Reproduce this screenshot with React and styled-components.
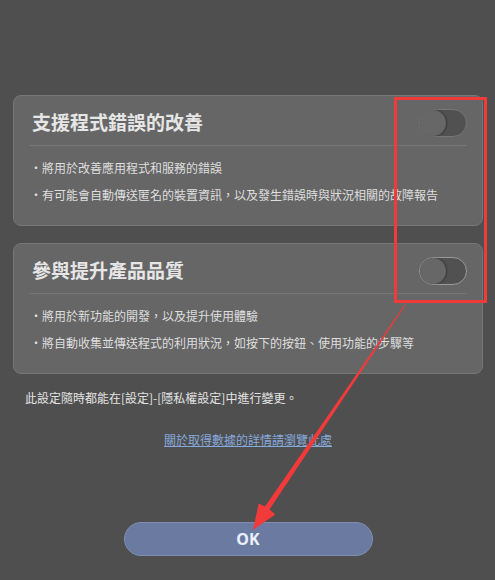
import styled, { createGlobalStyle } from "styled-components";

const GlobalStyle = createGlobalStyle`
    html, body {
        margin: 0;
        padding: 0;
        background: #4f4f4f;
    }
    body {
        font-family: "Noto Sans CJK TC", "Noto Sans", sans-serif;
    }
`
const Page = styled.div`
    position: relative;
    width: 495px;
    height: 580px;
    box-sizing: border-box;
    padding: 95px 12px 0 13px;
    display: flex;
    flex-direction: column;
    overflow: hidden;
`
const Card = styled.div`
    border: 1px solid #777777;
    border-radius: 8px;
    background: #666666;
    padding: 13px 15px 17px 15px;
    margin-bottom: ${props => props.$gap || 0}px;
`
const Header = styled.div`
    display: flex;
    justify-content: space-between;
    align-items: center;
    height: 28px;
    padding-bottom: 8px;
    border-bottom: 1px solid #767676;
`
const Title = styled.h2`
    margin: 0 0 4px 3px;
    font-size: 19px;
    font-weight: 700;
    color: #e6e6e6;
    letter-spacing: 0;
`
const Track = styled.div`
    width: 46px;
    height: 26px;
    border-radius: 14px;
    background: #515151;
    border: 1px solid ${props => props.$border || "#737373"};
    display: flex;
    align-items: center;
`
const Knob = styled.div`
    width: 26px;
    height: 26px;
    border-radius: 50%;
    background: #676767;
    box-shadow: 1px 0 2px rgba(0, 0, 0, 0.35);
`
const List = styled.ul`
    list-style: none;
    margin: 0;
    padding: 8px 0 0 1px;
`
const Item = styled.li`
    font-size: 12px;
    line-height: 27px;
    color: #dedede;
    white-space: nowrap;
`
const Notice = styled.p`
    margin: 15px 0 0 12px;
    font-size: 12px;
    line-height: 18px;
    color: #e4e4e4;
`
const Link = styled.a`
    align-self: center;
    margin-top: 24px;
    font-size: 12px;
    line-height: 18px;
    color: #86a9dc;
    text-decoration: underline;
    cursor: pointer;
`
const OkButton = styled.button`
    align-self: center;
    margin-top: 73px;
    width: 249px;
    height: 34px;
    border-radius: 17px;
    border: 1px solid #7e8db2;
    background: #6a7aa0;
    color: #e9f0fb;
    font-family: "Noto Sans", "Liberation Sans", sans-serif;
    font-size: 16px;
    font-weight: 700;
    cursor: pointer;
`
const Overlay = styled.svg`
    position: absolute;
    left: 0;
    top: 0;
    pointer-events: none;
`

function Toggle(props) {
    return (
        <Track $border={props.border}>
            <Knob />
        </Track>
    );
}

const sections = [
    {
        title: "支援程式錯誤的改善",
        border: "#777777",
        items: [
            "・將用於改善應用程式和服務的錯誤",
            "・有可能會自動傳送匿名的裝置資訊，以及發生錯誤時與狀況相關的故障報告",
        ],
    },
    {
        title: "參與提升產品品質",
        border: "#9a9a9a",
        items: [
            "・將用於新功能的開發，以及提升使用體驗",
            "・將自動收集並傳送程式的利用狀況，如按下的按鈕、使用功能的步驟等",
        ],
    },
];

export default function App() {
    return (
        <>
            <GlobalStyle />
            <Page>
                {sections.map((s, i) => (
                    <Card key={s.title} $gap={i === 0 ? 17 : 0}>
                        <Header>
                            <Title>{s.title}</Title>
                            <Toggle border={s.border} />
                        </Header>
                        <List>
                            {s.items.map(t => <Item key={t}>{t}</Item>)}
                        </List>
                    </Card>
                ))}
                <Notice>此設定隨時都能在[設定]-[隱私權設定]中進行變更。</Notice>
                <Link>關於取得數據的詳情請瀏覽此處</Link>
                <OkButton>OK</OkButton>
                <Overlay width="495" height="580" viewBox="0 0 495 580">
                    <rect x="395.5" y="98.5" width="90" height="203" fill="none" stroke="#f23a3a" strokeWidth="3" />
                    <polygon
                        fill="#f23a3a"
                        points="405.4,305.3 404.6,304.7 265,506.5 258.7,503.4 253,530 275.3,514.6 269.5,509.5"
                    />
                </Overlay>
            </Page>
        </>
    );
}
